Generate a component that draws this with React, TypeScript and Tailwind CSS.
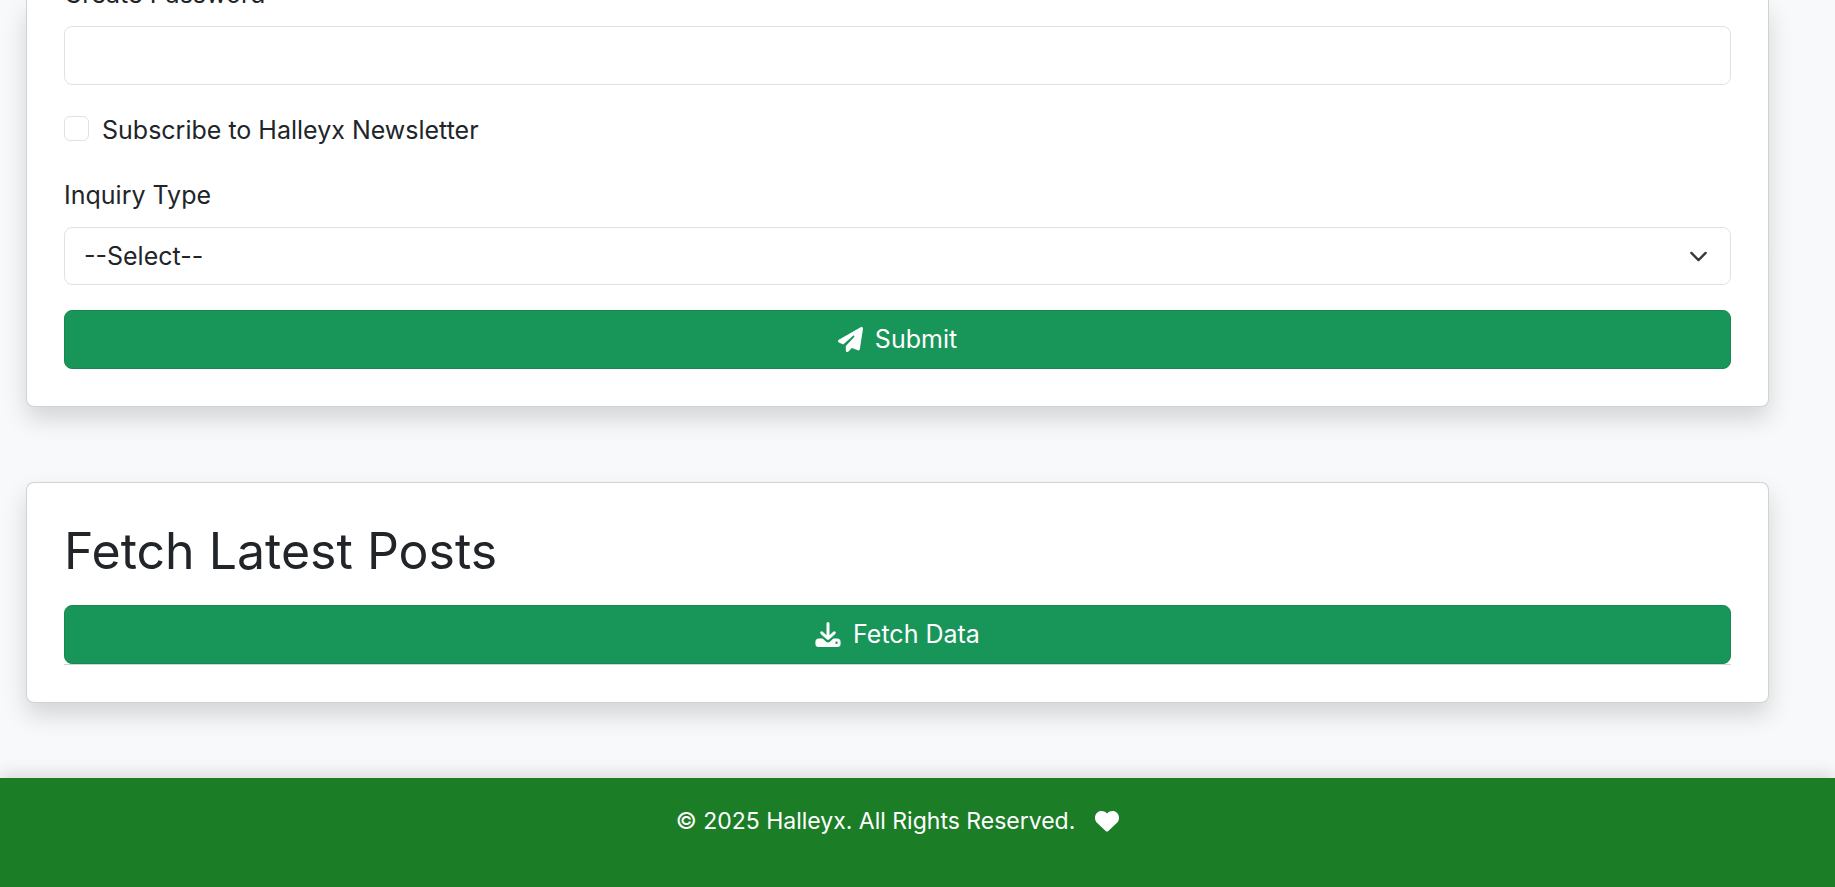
import type { ReactNode } from "react";
import { FaHeart, FaPaperPlane } from "react-icons/fa6";

const cardClass =
  "rounded-lg border border-black/[0.175] bg-white px-[37px] pb-[37px] shadow-[0_12px_25px_rgba(0,0,0,0.15)]";

function ActionButton({ icon, children }: { icon: ReactNode; children: ReactNode }) {
  return (
    <button
      type="button"
      className="flex h-[59px] w-full items-center justify-center gap-3 rounded-lg border border-[#198754] bg-[#189558] text-white"
    >
      {icon}
      {children}
    </button>
  );
}

function DownloadIcon() {
  return (
    <svg viewBox="0 0 26 26" className="size-[26px]" fill="none" aria-hidden="true">
      <path
        fill="currentColor"
        fillRule="evenodd"
        d="M4 16.5h3.600l3.200 2.900a3.300 3.300 0 0 0 4.400 0l3.200-2.900H22a3.600 3.600 0 0 1 3.600 3.600v1.600A3.300 3.300 0 0 1 22.300 25H3.700A3.300 3.300 0 0 1 .4 21.700v-1.600A3.600 3.600 0 0 1 4 16.500zm17.500 3.100a1.200 1.200 0 1 0 0 2.400 1.200 1.200 0 0 0 0-2.400z"
      />
      <path
        stroke="currentColor"
        strokeWidth="3"
        strokeLinecap="round"
        strokeLinejoin="round"
        d="M13 1.600v14.400M6.700 10.800l6.300 5.700 6.300-5.700"
      />
    </svg>
  );
}

export default function App() {
  return (
    <div className="flex min-h-screen flex-col overflow-hidden bg-[#f8f9fb] font-[Inter,sans-serif] text-[25px] leading-[37px] text-[#212529]">
      <main className="flex flex-col gap-[75px] pr-[66px] pb-[75px] pl-[26px]">
        <form className={`${cardClass} rounded-t-none border-t-0`}>
          <div className="-mt-6">
            <label htmlFor="password" className="block pb-[13px]">
              Create Password
            </label>
            <input
              id="password"
              type="password"
              className="block h-[59px] w-full rounded-lg border border-[#dee2e6] bg-white px-5"
            />
          </div>
          <div className="mt-[27px] flex gap-[13px]">
            <input
              id="newsletter"
              type="checkbox"
              className="mt-1 size-[25px] appearance-none rounded-md border border-[#dee2e6] bg-white checked:bg-[#189558]"
            />
            <label htmlFor="newsletter">Subscribe to Halleyx Newsletter</label>
          </div>
          <div className="mt-7 mb-[25px]">
            <label htmlFor="inquiry" className="block pb-[13px]">
              Inquiry Type
            </label>
            <div className="grid items-center">
              <select
                id="inquiry"
                className="col-start-1 row-start-1 h-[58px] w-full appearance-none rounded-lg border border-[#dee2e6] bg-white px-[19px]"
              >
                <option>--Select--</option>
              </select>
              <svg
                viewBox="0 0 16 16"
                className="pointer-events-none col-start-1 row-start-1 mr-[23px] size-[19px] justify-self-end"
                fill="none"
                stroke="#343a40"
                strokeWidth="2"
                strokeLinecap="round"
                strokeLinejoin="round"
                aria-hidden="true"
              >
                <path d="m2 5 6 6 6-6" />
              </svg>
            </div>
          </div>
          <ActionButton icon={<FaPaperPlane className="size-[25px]" />}>Submit</ActionButton>
        </form>

        <section className={`${cardClass} pt-[38px]`}>
          <h2 className="mb-6 text-[50px] leading-[60px]">Fetch Latest Posts</h2>
          <ActionButton icon={<DownloadIcon />}>Fetch Data</ActionButton>
          <div className="border-t border-[#d2d2d2]" />
        </section>
      </main>

      <footer className="flex flex-1 items-start justify-center gap-5 bg-[#1c7d27] pt-[25px] pr-[40px] text-[23px] text-white shadow-[0_-5px_16px_rgba(0,0,0,0.12)]">
        <p>© 2025 Halleyx. All Rights Reserved.</p>
        <span className="flex h-9 items-center">
          <FaHeart className="size-6" />
        </span>
      </footer>
    </div>
  );
}
